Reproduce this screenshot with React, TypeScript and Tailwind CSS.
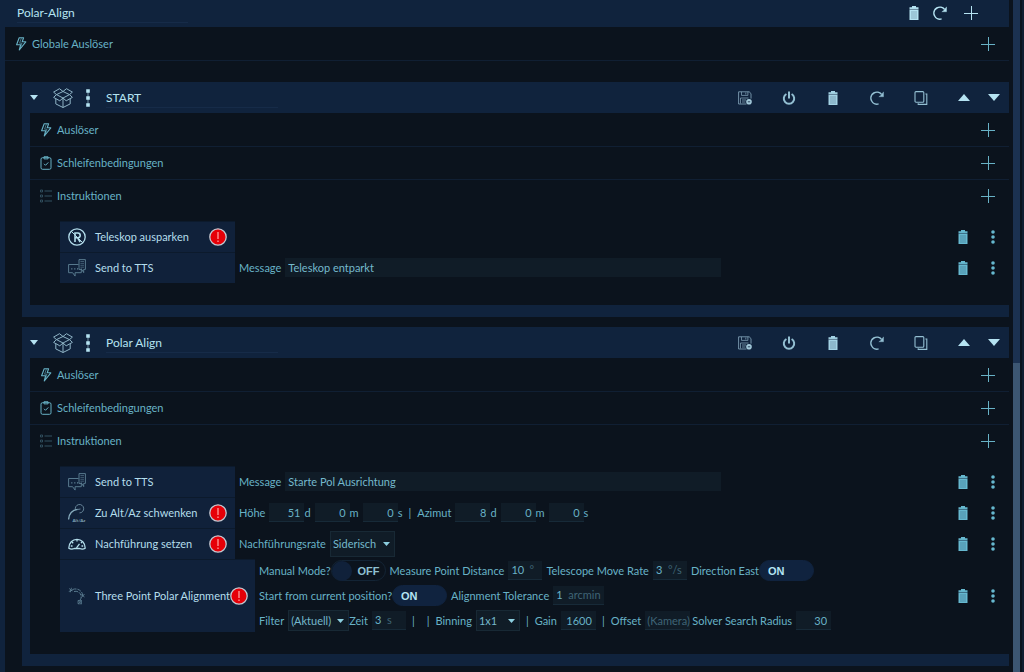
import { useState, type ReactNode } from 'react';

type IconProps = { className?: string };

function TrashIcon({ className }: IconProps) {
  return (
    <svg viewBox="0 0 10 14" className={className} fill="currentColor" aria-hidden="true">
      <path d="M3 0h4v1.2h2.5v2h-9v-2H3z M0.5 3.5h9V14h-9z" />
      <path d="M0.5 3.4h9M3 5v8M5 5v8M7 5v8" stroke="#10233d" strokeWidth="0.3" />
    </svg>
  );
}

function RefreshIcon({ className }: IconProps) {
  return (
    <svg viewBox="0 0 14 14" className={className} fill="none" stroke="currentColor" aria-hidden="true">
      <path d="M8.6 12.9A6 6 0 1 1 11.6 3.4" strokeWidth="1.5" />
      <path d="M13.6 0.8v5H8.8l1.8-1.4z" fill="currentColor" strokeWidth="0.3" />
    </svg>
  );
}

function PlusIcon({ className }: IconProps) {
  return (
    <svg viewBox="0 0 14 14" className={className} stroke="currentColor" aria-hidden="true">
      <path d="M0 7.5h14M7.5 0v14" strokeWidth="1" />
    </svg>
  );
}

function BoltIcon({ className }: IconProps) {
  return (
    <svg viewBox="0 0 12 14" className={className} fill="none" stroke="currentColor" strokeLinejoin="round" aria-hidden="true">
      <path d="M4.2 0.8h4.4L7.2 4.8h3.6L4.3 13l1.3-5.2H1.6z" strokeWidth="1.1" />
      <path d="M6.4 1 4.6 6.2h2.4L5.4 11" strokeWidth="0.6" />
    </svg>
  );
}

function ClipboardIcon({ className }: IconProps) {
  return (
    <svg viewBox="0 0 12 14" className={className} fill="none" stroke="currentColor" aria-hidden="true">
      <rect x="1" y="1.7" width="10" height="11.6" rx="1.5" strokeWidth="1" />
      <path d="M4 0.7h4v2.2H4z" strokeWidth="0.9" />
      <path d="m4 7.8 1.5 1.5L8.3 6.4" strokeWidth="1" />
    </svg>
  );
}

function ListIcon({ className }: IconProps) {
  return (
    <svg viewBox="0 0 12 14" className={className} fill="none" stroke="currentColor" aria-hidden="true">
      <path d="M4.5 2H12M4.5 7H12M4.5 12H12" strokeWidth="0.8" />
      <path d="M0.5 1h2v2h-2zM0.5 6h2v2h-2zM0.5 11h2v2h-2z" strokeWidth="0.7" />
    </svg>
  );
}

function BoxIcon({ className }: IconProps) {
  return (
    <svg viewBox="0 0 20 20" className={className} fill="none" stroke="currentColor" strokeWidth="1" strokeLinejoin="round" aria-hidden="true">
      <path d="M10 3.5 6.5 0.7 0.6 4.1 3.5 6.6 10 3.5l6.5 3.1 2.9-2.5-5.9-3.4z" />
      <path d="M3.5 6.6 10 10l6.5-3.4M3.5 6.6 0.6 9.4l6.2 3.4L10 10l3.2 2.8 6.2-3.4-2.9-2.8" />
      <path d="M2.8 10.8v5.1l7.2 3.6 7.2-3.6v-5.1M10 10v9.5" />
    </svg>
  );
}

function GripIcon({ className }: IconProps) {
  return (
    <svg viewBox="0 0 4 18" className={className} fill="currentColor" aria-hidden="true">
      <path d="M1.7 2h0.6v14H1.7z" />
      <path d="M0.2 0.2h3.6v3.6H0.2zM0.2 7.2h3.6v3.6H0.2zM0.2 14.2h3.6v3.6H0.2z" />
    </svg>
  );
}

function DotsIcon({ className }: IconProps) {
  return (
    <svg viewBox="0 0 4 14" className={className} fill="currentColor" aria-hidden="true">
      <circle cx="2" cy="2" r="1.8" />
      <circle cx="2" cy="7" r="1.8" />
      <circle cx="2" cy="12" r="1.8" />
    </svg>
  );
}

function SaveIcon({ className }: IconProps) {
  return (
    <svg viewBox="0 0 14 14" className={className} fill="none" stroke="currentColor" aria-hidden="true">
      <path d="M8.5 13H0.6V0.8h10.6l1.8 1.8v5" strokeWidth="0.9" />
      <path d="M3.5 0.8v3.6h6.4V0.8M7.8 1.5v2M2.5 12.5V7h8M4 9h4M4 11h3.5" strokeWidth="0.8" />
      <circle cx="11" cy="10.8" r="2.8" fill="#a3cadb" stroke="none" />
      <path d="M9.8 10.8h2.4" stroke="#10233d" strokeWidth="0.8" />
    </svg>
  );
}

function PowerIcon({ className }: IconProps) {
  return (
    <svg viewBox="0 0 14 14" className={className} fill="none" stroke="currentColor" strokeWidth="2" aria-hidden="true">
      <path d="M4.4 3a5.2 5.2 0 1 0 5.2 0M7 0.5v7" />
    </svg>
  );
}

function CopyIcon({ className }: IconProps) {
  return (
    <svg viewBox="0 0 14 14" className={className} fill="none" stroke="currentColor" strokeWidth="1.1" aria-hidden="true">
      <rect x="1" y="0.6" width="8.8" height="10.6" rx="1" />
      <path d="M11.4 3h1.4v10.4H4.2v-1.2" />
    </svg>
  );
}

function Triangle({ className, up }: IconProps & { up?: boolean }) {
  return (
    <svg viewBox="0 0 12 6" className={className} fill="currentColor" preserveAspectRatio="none" aria-hidden="true">
      <path d={up ? 'M0 6 6 0l6 6z' : 'M0 0h12L6 6z'} />
    </svg>
  );
}

function UnparkIcon({ className }: IconProps) {
  return (
    <svg viewBox="0 0 18 18" className={className} fill="none" stroke="currentColor" aria-hidden="true">
      <circle cx="9" cy="9" r="8.2" strokeWidth="1.3" />
      <path d="M7 14V5h2.8a2.4 2.4 0 0 1 0 4.8H7M9.6 9.8l2.6 4.2" strokeWidth="1.6" />
      <path d="M3.2 3.2l11.6 11.6" strokeWidth="1" />
    </svg>
  );
}

function SpeechIcon({ className }: IconProps) {
  return (
    <svg viewBox="0 0 18 18" className={className} fill="none" stroke="currentColor" strokeWidth="0.9" aria-hidden="true">
      <path d="M10.5 5.5H0.6v8.2h4l2.5 3.4v-3.4h6.2V9.5" />
      <path d="M11 8.5V0.6h6.4v9.8h-1.7v3.2l-2-3.2H11z" />
      <path d="M12.4 2.5H16M12.4 4.4H16M12.4 6.3H16M12.4 8.2H16" strokeWidth="0.6" />
      <path d="M3.2 9.8h1.2M6.2 9.8h1.2M9 9.8h1.2" strokeWidth="1.2" />
    </svg>
  );
}

function AltAzIcon({ className }: IconProps) {
  return (
    <svg viewBox="0 0 18 18" className={className} fill="none" stroke="currentColor" aria-hidden="true">
      <path d="M0.6 15.5C1 9.5 4 6.2 9.6 5.4" strokeWidth="1.3" />
      <path d="M7.5 6A4.2 4.2 0 1 1 11.5 8.9M9.5 5.5l3-0.5" strokeWidth="0.7" />
      <text x="4.5" y="17.6" fontSize="4.5" fontWeight="700" fill="currentColor" stroke="none">Alt/Az</text>
    </svg>
  );
}

function GaugeIcon({ className }: IconProps) {
  return (
    <svg viewBox="0 0 18 18" className={className} fill="none" stroke="currentColor" strokeWidth="1.3" strokeLinejoin="round" aria-hidden="true">
      <path d="M0.8 13.2C0.8 7.8 4.5 4.3 9 4.3s8.2 3.5 8.2 8.9c-1.6 1-4 0.9-5.6 0.3H6.4c-1.6 0.6-4 0.7-5.6-0.3z" />
      <path d="M9 4.5v2M4 7l1.2 1.2M14 7l-1 1.2M2.8 11h1.7M13.5 11h1.7M8.5 12.8l3-4" />
    </svg>
  );
}

function PolarIcon({ className }: IconProps) {
  return (
    <svg viewBox="0 0 18 18" className={className} fill="none" stroke="currentColor" aria-hidden="true">
      <path d="M4.5 2.5C9.5 0.5 15 4 14.8 9.5M6 4.5c4-1 7 1.5 7.2 5.5c0 1.5-0.7 3-1.8 3.5" strokeWidth="0.9" strokeDasharray="4 1" />
      <path d="M1.2 1.5l3 2.5M3.5 0.8l-1.2 4.5M0.8 4.5l4-1.5M13 7.5l3.5 2.5M16.5 7l-3 3.5" strokeWidth="0.8" />
      <path d="M10 13.5h3.5v3.3H10zM10 13.5l3.5 3.3M13.5 13.5 10 16.8" strokeWidth="0.7" />
    </svg>
  );
}

function Warning() {
  return (
    <span role="img" aria-label="Fehler" className="ml-auto size-[18px] shrink-0">
      <svg viewBox="0 0 18 18" className="size-full">
        <circle cx="9" cy="9" r="8.2" fill="#e60008" stroke="#c3c9d2" strokeWidth="1.3" />
        <path d="M9 4v7M9 12.4v1.6" stroke="#ff9a9a" strokeWidth="1.3" />
      </svg>
    </span>
  );
}

function IconButton({ label, className, children }: { label: string; className: string; children: ReactNode }) {
  return (
    <button type="button" aria-label={label} className={`flex h-5 shrink-0 items-center justify-center ${className}`}>
      {children}
    </button>
  );
}

function SectionRow({ icon, title, className }: { icon: ReactNode; title: string; className: string }) {
  return (
    <div className={`flex items-center border-[#101f33] pr-[14px] pl-[10px] ${className}`}>
      {icon}
      <span className="ml-[5px] flex-1">{title}</span>
      <IconButton label={`${title} hinzufügen`} className="w-[14px]">
        <PlusIcon className="size-[14px]" />
      </IconButton>
    </div>
  );
}

function Container({ title, children }: { title: string; children: ReactNode }) {
  const [name, setName] = useState(title);
  return (
    <section className="bg-[#10233d] pb-3 pl-2">
      <div className="flex h-[31px] items-center pr-[9px] text-[#b5e3f2]">
        <IconButton label="Zuklappen" className="w-2">
          <Triangle className="h-[5px] w-2" />
        </IconButton>
        <BoxIcon className="ml-[15px] size-5 text-[#8fb4c6]" />
        <GripIcon className="ml-[13px] h-[18px] w-1" />
        <input
          aria-label="Name"
          value={name}
          onChange={(e) => setName(e.target.value)}
          className="ml-4 h-5 w-[172px] border-b border-[#162b48] text-xs outline-none"
        />
        <div className="ml-auto flex items-center">
          <IconButton label="Speichern" className="w-11 text-[#7d9db3]">
            <SaveIcon className="size-[14px]" />
          </IconButton>
          <IconButton label="Deaktivieren" className="w-11 text-[#93bfd2]">
            <PowerIcon className="size-[14px]" />
          </IconButton>
          <IconButton label="Löschen" className="w-11 text-[#a3d2e4]">
            <TrashIcon className="h-[14px] w-[10px]" />
          </IconButton>
          <IconButton label="Zurücksetzen" className="w-11 text-[#93bfd2]">
            <RefreshIcon className="size-[14px]" />
          </IconButton>
          <IconButton label="Kopieren" className="w-[43px] text-[#93bfd2]">
            <CopyIcon className="size-[14px]" />
          </IconButton>
          <IconButton label="Nach oben" className="w-11">
            <Triangle up className="h-[7px] w-3" />
          </IconButton>
          <IconButton label="Nach unten" className="ml-[2px] w-3">
            <Triangle className="h-[7px] w-3" />
          </IconButton>
        </div>
      </div>
      <div className="bg-[#0b131d] pb-[22px]">
        <SectionRow className="h-[33px] border-t border-t-transparent" icon={<BoltIcon className="h-[14px] w-3" />} title="Auslöser" />
        <SectionRow className="h-[33px] border-t" icon={<ClipboardIcon className="h-[14px] w-3" />} title="Schleifenbedingungen" />
        <SectionRow className="h-[33px] border-t" icon={<ListIcon className="h-[14px] w-3 text-[#3c6273]" />} title="Instruktionen" />
        <div className="pt-[9px] pr-[14px] pl-[30px]">{children}</div>
      </div>
    </section>
  );
}

type InstructionProps = {
  icon: ReactNode;
  title: string;
  warning?: boolean;
  wide?: boolean;
  children?: ReactNode;
};

function Instruction({ icon, title, warning, wide, children }: InstructionProps) {
  return (
    <div className="flex min-h-[31px] items-stretch">
      <div
        className={`flex shrink-0 items-center border-t border-[#0c1a2c] bg-[#10213a] px-2 text-[#b4deec] ${
          wide ? 'w-[195px]' : 'w-[175px]'
        }`}
      >
        {icon}
        <span className="ml-[9px] whitespace-nowrap">{title}</span>
        {warning && <Warning />}
      </div>
      <div className="flex flex-1 items-center pl-1">{children}</div>
      <div className="flex items-center text-[#66b8cf]">
        <IconButton label="Löschen" className="w-[10px]">
          <TrashIcon className="h-[14px] w-[10px]" />
        </IconButton>
        <IconButton label="Mehr" className="ml-[23px] w-1">
          <DotsIcon className="h-[14px] w-1" />
        </IconButton>
      </div>
    </div>
  );
}

function Message({ value }: { value: string }) {
  return (
    <label className="flex items-center gap-1">
      Message
      <input defaultValue={value} className="h-[19px] w-[436px] bg-[#101c27] px-[3px] text-[#75b9cc] outline-none" />
    </label>
  );
}

function NumberField({ label, value, className }: { label: string; value: string; className?: string }) {
  return (
    <input
      aria-label={label}
      defaultValue={value}
      className={`h-[19px] w-[35px] border-b border-[#172a38] bg-[#101c27] pr-1 text-right outline-none ${className ?? ''}`}
    />
  );
}

function UnitField({ label, value, unit, className }: { label: string; value: string; unit: string; className: string }) {
  return (
    <span className={`flex h-[19px] items-center border-b border-[#172a38] bg-[#101c27] pl-[3px] ${className}`}>
      <input aria-label={label} defaultValue={value} className={`outline-none ${value.length > 1 ? 'w-[18px]' : 'w-3'}`} />
      <span className="text-[#3f6476]">{unit}</span>
    </span>
  );
}

function Dropdown({ label, value, className }: { label: string; value: string; className: string }) {
  return (
    <span className={`relative flex ${className}`}>
      <select aria-label={label} defaultValue={value} className="w-full appearance-none border border-[#182935] bg-[#101c27] pl-[2px] text-[#75b9cc] outline-none">
        <option>{value}</option>
      </select>
      <Triangle className="pointer-events-none absolute top-1/2 right-[5px] h-1 w-[7px] -translate-y-1/2 text-[#8ccfe0]" />
    </span>
  );
}

function Toggle({ label, initial }: { label: string; initial: boolean }) {
  const [on, setOn] = useState(initial);
  return (
    <button
      type="button"
      role="switch"
      aria-checked={on}
      aria-label={label}
      onClick={() => setOn(!on)}
      className={`flex h-[21px] w-[55px] shrink-0 items-center rounded-full border font-['Liberation_Sans',sans-serif] font-bold ${
        on ? 'border-[#10233f] bg-[#10233f] pl-2 text-[#b5e3f2]' : 'border-[#132435] text-[#8fc0d2]'
      }`}
    >
      {!on && <span className="mr-[6px] size-5 rounded-full bg-[#10213a]" />}
      {on ? 'ON' : 'OFF'}
    </button>
  );
}

export default function App() {
  const tile = 'size-[18px] shrink-0';
  return (
    <div className="flex min-h-screen bg-[#0b131d] font-['Lato',sans-serif] text-[11px] leading-4 text-[#68b2c6]">
      <main className="min-w-0 flex-1 border-l-[5px] border-[#10233d]">
        {/* Title bar */}
        <header className="flex h-[27px] items-center bg-[#10233d] pr-[31px] pb-[2px] pl-3 text-[#b5e3f2]">
          <input aria-label="Sequenz" defaultValue="Polar-Align" className="h-5 w-[171px] border-b border-[#162b48] text-xs outline-none" />
          <div className="ml-auto flex items-center">
            <IconButton label="Alle löschen" className="w-[10px]">
              <TrashIcon className="h-[14px] w-[10px]" />
            </IconButton>
            <IconButton label="Zurücksetzen" className="ml-[14px] w-[14px]">
              <RefreshIcon className="size-[14px]" />
            </IconButton>
            <IconButton label="Hinzufügen" className="ml-[17px] w-[14px]">
              <PlusIcon className="size-[14px]" />
            </IconButton>
          </div>
        </header>
        <SectionRow className="h-[34px] border-b" icon={<BoltIcon className="h-[14px] w-3" />} title="Globale Auslöser" />

        <div className="flex flex-col gap-[10px] pt-[21px] pb-1 pl-[17px]">
          <Container title="START">
            <Instruction icon={<UnparkIcon className={tile} />} title="Teleskop ausparken" warning />
            <Instruction icon={<SpeechIcon className={`${tile} text-[#5f8296]`} />} title="Send to TTS">
              <Message value="Teleskop entparkt" />
            </Instruction>
          </Container>

          <Container title="Polar Align">
            <Instruction icon={<SpeechIcon className={`${tile} text-[#5f8296]`} />} title="Send to TTS">
              <Message value="Starte Pol Ausrichtung" />
            </Instruction>
            <Instruction icon={<AltAzIcon className={`${tile} text-[#86abbd]`} />} title="Zu Alt/Az schwenken" warning>
              <span className="mr-1">Höhe</span>
              <NumberField label="Höhe Grad" value="51" />d
              <NumberField label="Höhe Minuten" value="0" className="ml-1" />m
              <NumberField label="Höhe Sekunden" value="0" className="ml-1" />s
              <span className="mx-[6px]">|</span>
              <span className="mr-1">Azimut</span>
              <NumberField label="Azimut Grad" value="8" />d
              <NumberField label="Azimut Minuten" value="0" className="ml-1" />m
              <NumberField label="Azimut Sekunden" value="0" className="ml-1" />s
            </Instruction>
            <Instruction icon={<GaugeIcon className={tile} />} title="Nachführung setzen" warning>
              <span className="mr-1">Nachführungsrate</span>
              <Dropdown label="Nachführungsrate" value="Siderisch" className="h-[26px] w-[65px]" />
            </Instruction>
            <Instruction icon={<PolarIcon className={`${tile} text-[#5f8296]`} />} title="Three Point Polar Alignment" warning wide>
              <div className="flex flex-col gap-[2px] whitespace-nowrap">
                <div className="flex h-[23px] items-center">
                  Manual Mode?
                  <Toggle label="Manual Mode" initial={false} />
                  <span className="mx-1">Measure Point Distance</span>
                  <UnitField label="Measure Point Distance" value="10" unit="°" className="w-[34px]" />
                  <span className="mx-1">Telescope Move Rate</span>
                  <UnitField label="Telescope Move Rate" value="3" unit="°/s" className="w-[34px]" />
                  <span className="ml-1">Direction East</span>
                  <Toggle label="Direction East" initial />
                </div>
                <div className="flex h-[23px] items-center">
                  Start from current position?
                  <Toggle label="Start from current position" initial />
                  <span className="mx-1">Alignment Tolerance</span>
                  <UnitField label="Alignment Tolerance" value="1" unit="arcmin" className="w-[51px]" />
                </div>
                <div className="flex h-[23px] items-center">
                  <span className="mr-1">Filter</span>
                  <Dropdown label="Filter" value="(Aktuell)" className="h-[21px] w-[61px]" />
                  <span className="mr-1">Zeit</span>
                  <UnitField label="Zeit" value="3" unit="s" className="w-[34px]" />
                  <span className="mx-[6px]">|</span>
                  <span className="mx-[6px]">|</span>
                  <span className="mr-1">Binning</span>
                  <Dropdown label="Binning" value="1x1" className="h-[21px] w-11" />
                  <span className="mx-[6px]">|</span>
                  <span className="mr-1">Gain</span>
                  <NumberField label="Gain" value="1600" />
                  <span className="mx-[6px]">|</span>
                  <span className="mr-1">Offset</span>
                  <input aria-label="Offset" placeholder="(Kamera)" className="h-[19px] w-[45px] border-b border-[#172a38] bg-[#101c27] pl-[2px] outline-none placeholder:text-[#3f6476]" />
                  <span className="mr-1 ml-[2px]">Solver Search Radius</span>
                  <NumberField label="Solver Search Radius" value="30" />
                </div>
              </div>
            </Instruction>
          </Container>
        </div>
      </main>

      {/* Scrollbar */}
      <div className="ml-1 flex w-[7px] shrink-0 flex-col bg-[#1b3150]">
        <div className="basis-[54%]" />
        <div className="flex-1 bg-[#3c5672]" />
      </div>
      <div className="ml-[2px] w-[2px] shrink-0 bg-[#101d2f]" />
    </div>
  );
}
